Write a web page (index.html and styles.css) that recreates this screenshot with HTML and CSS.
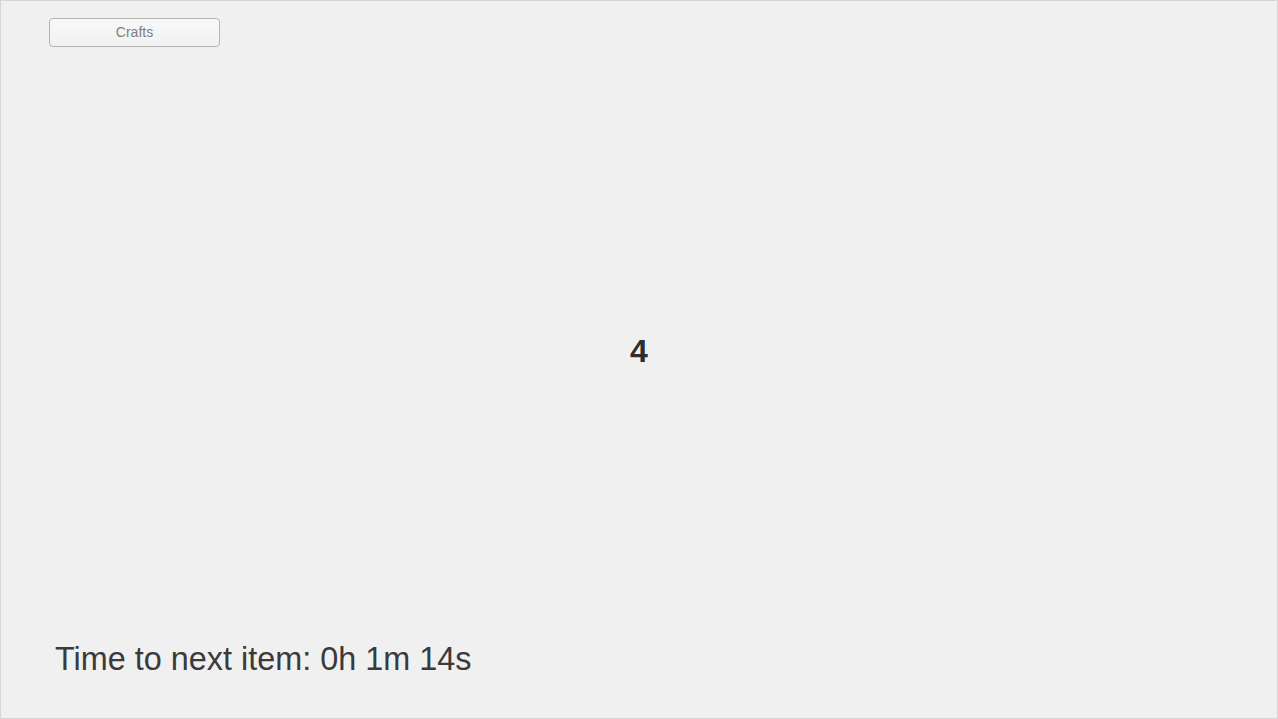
FILE: index.html
```html
<!DOCTYPE html>
<html>
<head>
<meta charset="utf-8">
<link rel="stylesheet" href="styles.css">
</head>
<body>
<div class="frame">
  <header class="top">
    <button class="crafts-btn">Crafts</button>
  </header>
  <main class="center">
    <div class="count">4</div>
  </main>
  <footer class="bottom">
    <div class="timer">Time to next item: 0h 1m 14s</div>
  </footer>
</div>
</body>
</html>
```

FILE: styles.css
```css
html, body {
  margin: 0;
  padding: 0;
  background: #f0f0f0;
}
body {
  font-family: "Liberation Sans", Arial, sans-serif;
}
.frame {
  box-sizing: border-box;
  width: 1278px;
  height: 719px;
  border: 1px solid #d6d6d6;
  background: #f0f0f0;
  display: flex;
  flex-direction: column;
}
.top {
  padding: 17px 0 0 48px;
  display: flex;
}
.crafts-btn {
  box-sizing: border-box;
  width: 171px;
  height: 29px;
  border: 1px solid #b4b4b4;
  border-radius: 4px;
  background: linear-gradient(#f9f9f9, #f1f1f1);
  font-family: "Liberation Sans", Arial, sans-serif;
  font-size: 14px;
  line-height: 26px;
  color: #808080;
  padding: 0 0 1px 0;
  margin: 0;
}
.center {
  flex: 1;
  display: flex;
  align-items: center;
  justify-content: center;
  padding-top: 14px;
}
.count {
  font-size: 32px;
  font-weight: bold;
  color: #2e2e2e;
}
.bottom {
  padding: 0 0 40px 54px;
}
.timer {
  font-size: 32.4px;
  color: #3a3a3a;
  line-height: 37px;
}
```
